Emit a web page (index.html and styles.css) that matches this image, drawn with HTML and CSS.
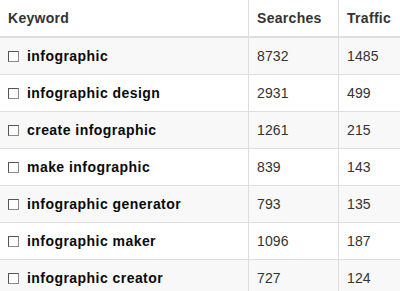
FILE: index.html
```html
<!DOCTYPE html>
<html>
<head>
<meta charset="utf-8">
<link rel="stylesheet" href="styles.css">
</head>
<body>
<table class="kw-table">
  <colgroup>
    <col class="c-kw">
    <col class="c-s">
    <col class="c-t">
  </colgroup>
  <thead>
    <tr><th>Keyword</th><th class="sep">Searches</th><th class="sep">Traffic</th></tr>
  </thead>
  <tbody>
    <tr><td><span class="kw"><span class="cb"></span>infographic</span></td><td class="sep">8732</td><td class="sep">1485</td></tr>
    <tr><td><span class="kw"><span class="cb"></span>infographic design</span></td><td class="sep">2931</td><td class="sep">499</td></tr>
    <tr><td><span class="kw"><span class="cb"></span>create infographic</span></td><td class="sep">1261</td><td class="sep">215</td></tr>
    <tr><td><span class="kw"><span class="cb"></span>make infographic</span></td><td class="sep">839</td><td class="sep">143</td></tr>
    <tr><td><span class="kw"><span class="cb"></span>infographic generator</span></td><td class="sep">793</td><td class="sep">135</td></tr>
    <tr><td><span class="kw"><span class="cb"></span>infographic maker</span></td><td class="sep">1096</td><td class="sep">187</td></tr>
    <tr><td><span class="kw"><span class="cb"></span>infographic creator</span></td><td class="sep">727</td><td class="sep">124</td></tr>
  </tbody>
</table>
</body>
</html>
```
FILE: styles.css
```css
html, body {
  margin: 0;
  padding: 0;
  background: #fff;
}
body {
  font-family: "Liberation Sans", Arial, sans-serif;
  font-size: 14px;
  line-height: 20px;
  color: #333;
}
.kw-table {
  width: 400px;
  table-layout: fixed;
  border-collapse: separate;
  border-spacing: 0;
}
.c-kw { width: 248px; }
.c-s { width: 90px; }
.c-t { width: 62px; }
.kw-table th {
  text-align: left;
  font-weight: bold;
  color: #333;
  padding: 8px;
  border-bottom: 2px solid #ddd;
  white-space: nowrap;
  letter-spacing: 0.3px;
}
.kw-table td {
  padding: 8px;
  border-top: 1px solid #ddd;
  white-space: nowrap;
  letter-spacing: 0.1px;
}
.kw-table tbody tr:first-child td {
  border-top: 0;
}
.kw-table tbody tr:nth-child(odd) td {
  background: #f8f8f8;
}
.kw-table .sep {
  border-left: 1px solid #ddd;
}
.kw {
  display: flex;
  align-items: center;
  gap: 8px;
  font-weight: bold;
  color: #0a0a0a;
  letter-spacing: 0.45px;
}
.cb {
  display: inline-block;
  box-sizing: border-box;
  width: 11px;
  height: 11px;
  background: #fff;
  border: 1px solid #8a8a8a;
  border-top-color: #555;
  border-left-color: #555;
  flex: none;
}
```
